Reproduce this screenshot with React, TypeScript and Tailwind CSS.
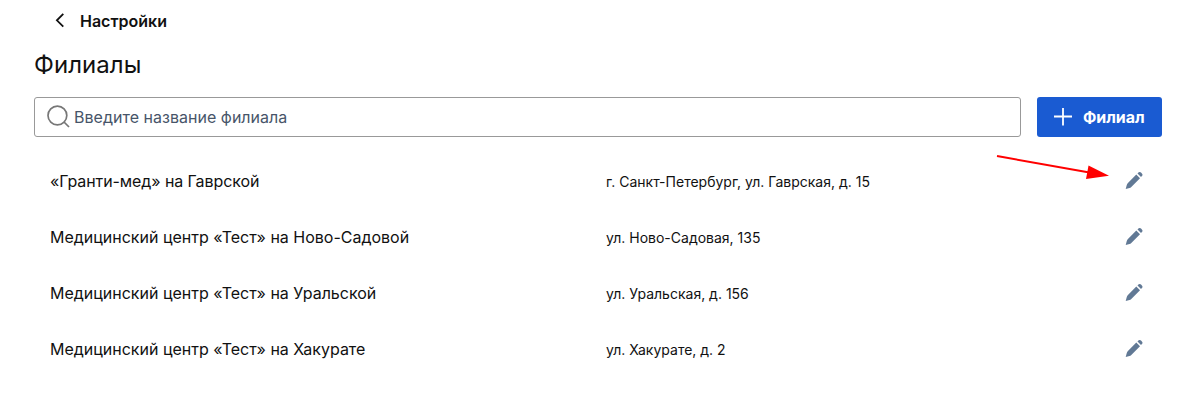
type Branch = {
  name: string;
  address: string;
};

const BRANCHES: Branch[] = [
  { name: "«Гранти-мед» на Гаврской", address: "г. Санкт-Петербург, ул. Гаврская, д. 15" },
  { name: "Медицинский центр «Тест» на Ново-Садовой", address: "ул. Ново-Садовая, 135" },
  { name: "Медицинский центр «Тест» на Уральской", address: "ул. Уральская, д. 156" },
  { name: "Медицинский центр «Тест» на Хакурате", address: "ул. Хакурате, д. 2" },
];

function ChevronLeftIcon({ className = "" }: { className?: string }) {
  return (
    <svg viewBox="0 0 10 16" aria-hidden="true" className={className} fill="none" stroke="currentColor" strokeWidth="1.8">
      <path d="M8.300 0.900 1.900 7.300l6.400 6.400" />
    </svg>
  );
}

function SearchIcon({ className = "" }: { className?: string }) {
  return (
    <svg viewBox="0 0 24 24" aria-hidden="true" className={className} fill="none" stroke="currentColor" strokeWidth="1.7">
      <circle cx="11.400" cy="10.500" r="9.400" />
      <path d="m18 17 5 5" />
    </svg>
  );
}

function PlusIcon({ className = "" }: { className?: string }) {
  return (
    <svg viewBox="0 0 18 18" aria-hidden="true" className={className} fill="none" stroke="currentColor" strokeWidth="1.8">
      <path d="M9 0v17.500M0 8.500h18" />
    </svg>
  );
}

function PencilIcon({ className = "" }: { className?: string }) {
  return (
    <svg viewBox="0 0 18 18" aria-hidden="true" className={className} fill="currentColor">
      <path d="M11.300 2.500 15 6.200 6.300 14.900Q5.500 15.700 4.500 16L0.700 17.100 1.700 13.300Q2 12.100 2.700 11.200z" />
      <path d="M12.500 1.500 13.400.600a1.900 1.900 0 0 1 2.600 0l.900.900a1.900 1.900 0 0 1 0 2.600L16 5z" />
    </svg>
  );
}

function BranchRow({ branch }: { branch: Branch }) {
  return (
    <li className="flex h-14 items-center pl-4 pr-[19px] first:[&>span:first-child]:tracking-[-0.09px]">
      <span className="w-[556px] text-base tracking-[-0.01px]">{branch.name}</span>
      <span className="flex-1 pt-0.5 text-sm">{branch.address}</span>
      <button type="button" aria-label="Редактировать">
        <PencilIcon className="h-[18px] w-[18px] text-[#617995]" />
      </button>
    </li>
  );
}

export default function App() {
  return (
    <div className="relative h-[420px] w-[1193px] overflow-hidden bg-white pl-[34px] pr-[31px] font-['Inter',sans-serif] text-[#111]">
      <a className="flex h-[42px] items-center gap-[15px] pl-[21px]">
        <ChevronLeftIcon className="h-4 w-2.5" />
        <span className="text-base font-semibold">Настройки</span>
      </a>
      <h1 className="mt-[7px] text-2xl leading-8 tracking-[0.05px]">Филиалы</h1>

      <div className="mt-4 flex gap-4">
        <label className="flex h-10 flex-1 items-center gap-1 rounded-[3px] border border-[#999] pl-[11px]">
          <SearchIcon className="h-6 w-6 text-[#777]" />
          <input
            className="flex-1 text-base tracking-[0.02px] outline-none placeholder:text-[#475569]"
            placeholder="Введите название филиала"
          />
        </label>
        <button type="button" className="flex h-10 w-[125px] items-center gap-[11px] rounded-[3px] bg-[#1a5bd2] pl-[17px] font-bold tracking-[-0.05px] text-white">
          <PlusIcon className="h-[18px] w-[18px]" />
          <span>Филиал</span>
        </button>
      </div>

      <ul className="mt-4">
        {BRANCHES.map((b) => (
          <BranchRow key={b.name} branch={b} />
        ))}
      </ul>

      {/* pointer to the edit button of the first row */}
      <svg viewBox="0 0 120 40" aria-hidden="true" className="absolute left-[990px] top-[150px] h-10 w-[120px]">
        <path d="M7 6 98 22.300" stroke="#f00" strokeWidth="2" />
        <path d="M119 25.800 98.500 15.500 96 29z" fill="#f00" />
      </svg>
    </div>
  );
}
